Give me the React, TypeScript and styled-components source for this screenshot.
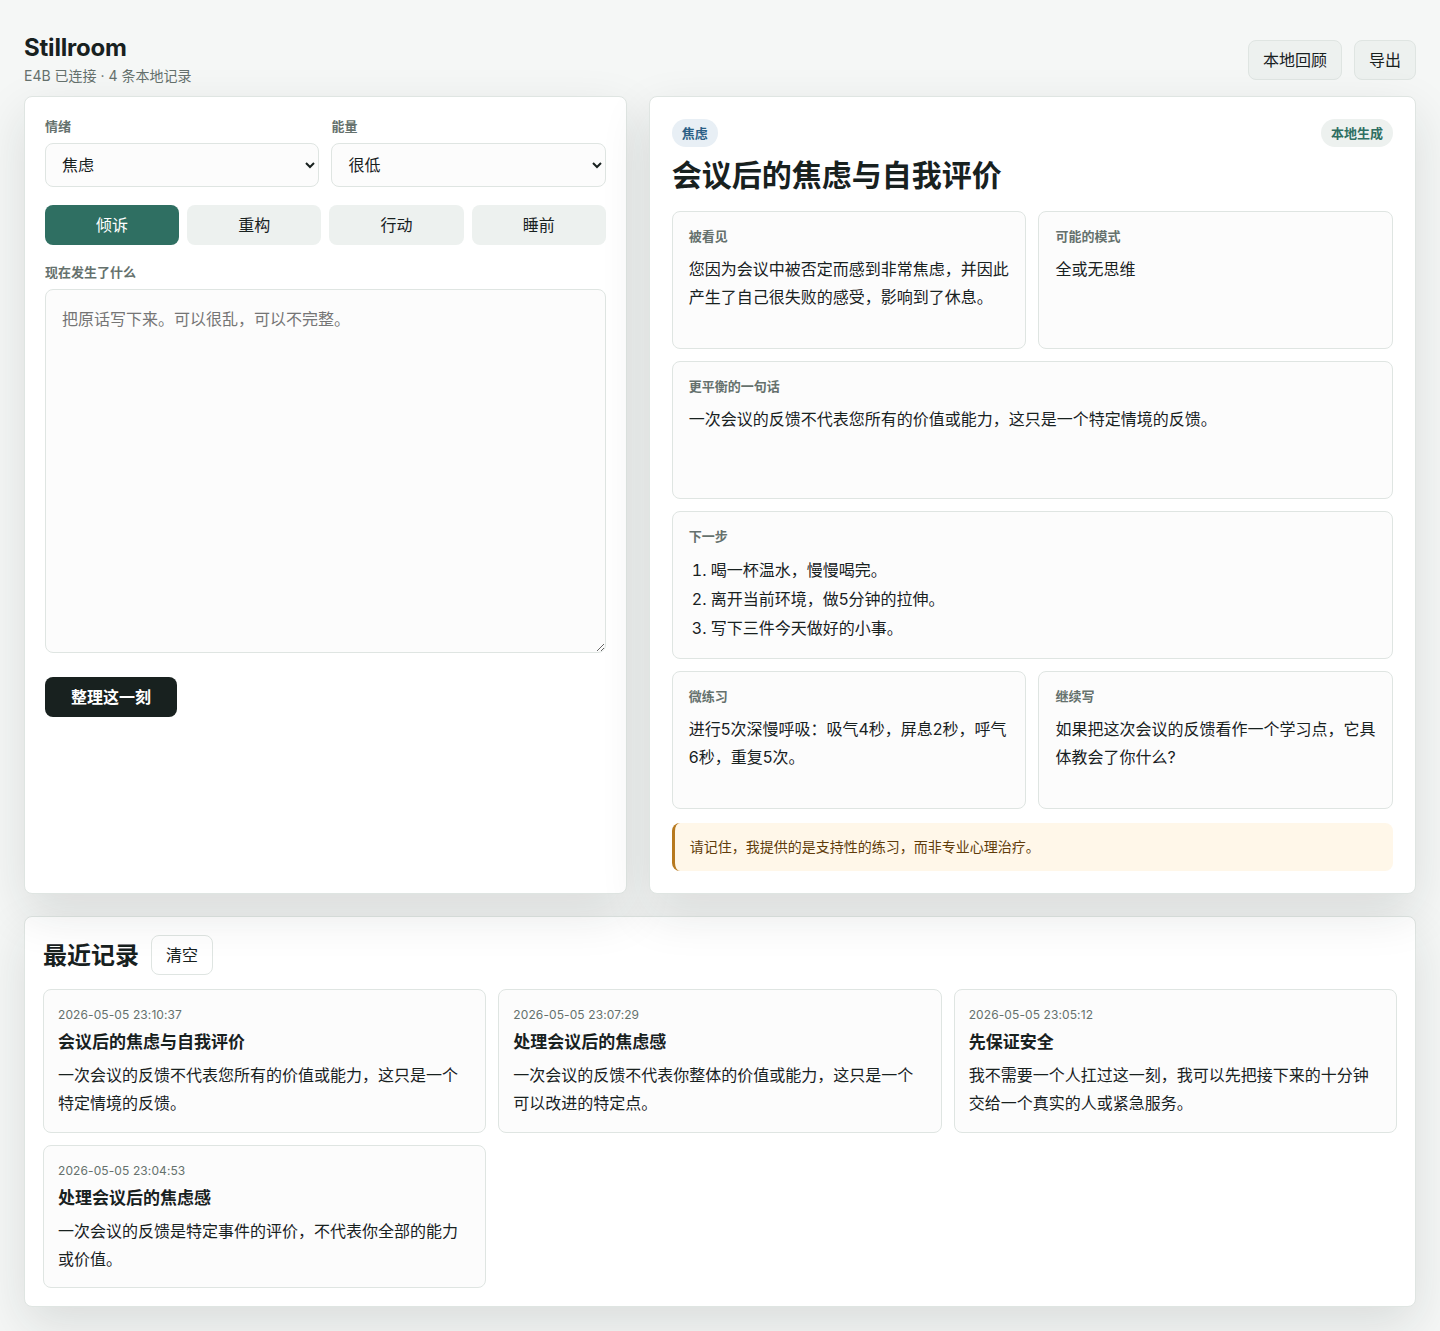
import React from 'react'
import styled, { createGlobalStyle } from 'styled-components'

const GlobalStyle = createGlobalStyle`
  * {
    box-sizing: border-box;
  }

  body {
    margin: 0;
    background: #f5f7f6;
    color: #18211f;
    font-family: Inter, "Noto Sans CJK SC", sans-serif;
  }
`

const Page = styled.div`
  padding: 32px 24px 24px;
`

const Header = styled.header`
  display: flex;
  justify-content: space-between;
  align-items: flex-end;
  margin-bottom: 11px;
`

const Brand = styled.h1`
  margin: 0;
  font-size: 24px;
  line-height: 32px;
  font-weight: 700;
  letter-spacing: -0.2px;
`

const Status = styled.p`
  margin: 3px 0 0;
  font-size: 14px;
  line-height: 18px;
  color: #65716d;
`

const HeaderActions = styled.div`
  display: flex;
  gap: 12px;
  margin-bottom: 5px;
`

const GhostButton = styled.button`
  height: 40px;
  padding: 0 14px 2px;
  border: 1px solid #dfe5e2;
  border-radius: 8px;
  background: #edf1ef;
  color: #18211f;
  font: inherit;
  font-size: 16px;
`

const Workspace = styled.main`
  position: relative;
  z-index: 1;
  display: grid;
  grid-template-columns: 0.44fr 0.56fr;
  gap: 22px;
`

const Panel = styled.section`
  border: 1px solid #dfe5e2;
  border-radius: 8px;
  background: #fff;
  box-shadow: 0 18px 50px rgba(24, 33, 31, 0.12);
`

const ComposePanel = styled(Panel)`
  padding: 20px;
  display: flex;
  flex-direction: column;
  align-items: flex-start;
`

const ResultPanel = styled(Panel)`
  padding: 22px;
  display: flex;
  flex-direction: column;
`

const SelectRow = styled.div`
  width: 100%;
  display: grid;
  grid-template-columns: 1fr 1fr;
  gap: 12px;
`

const Field = styled.label`
  display: block;
`

const FieldLabel = styled.span`
  display: block;
  margin-bottom: 8px;
  font-size: 13px;
  line-height: 18px;
  font-weight: 600;
  color: #65716d;
`

const Select = styled.select`
  width: 100%;
  height: 44px;
  padding: 0 12px;
  border: 1px solid #dfe5e2;
  border-radius: 8px;
  background: #fcfcfc;
  color: #18211f;
  font: inherit;
  font-size: 16px;
`

const ModeRow = styled.div`
  width: 100%;
  display: grid;
  grid-template-columns: repeat(4, 1fr);
  gap: 8px;
  margin: 18px 0;
`

const ModeButton = styled.button<{ $active?: boolean }>`
  height: 40px;
  padding: 0 0 2px;
  border: 0;
  border-radius: 8px;
  background: ${({ $active }) => ($active ? '#2f6f62' : '#edf1ef')};
  color: ${({ $active }) => ($active ? '#fff' : '#18211f')};
  font: inherit;
  font-size: 16px;
`

const TextField = styled(Field)`
  width: 100%;
`

const TextArea = styled.textarea`
  display: block;
  width: 100%;
  height: 364px;
  padding: 15px 16px;
  border: 1px solid #dfe5e2;
  border-radius: 8px;
  background: #fcfcfc;
  color: #18211f;
  font: inherit;
  font-size: 16px;
  line-height: 28px;
  resize: vertical;

  &::placeholder {
    color: #757575;
  }
`

const SubmitButton = styled.button`
  width: 132px;
  height: 40px;
  margin-top: 24px;
  padding: 0 0 2px;
  border: 0;
  border-radius: 8px;
  background: #18211f;
  color: #fff;
  font: inherit;
  font-size: 16px;
  font-weight: 700;
`

const ResultTop = styled.div`
  display: flex;
  justify-content: space-between;
`

const Pill = styled.span<{ $tone: 'blue' | 'green' }>`
  height: 28px;
  padding: 0 10px;
  border-radius: 999px;
  background: ${({ $tone }) => ($tone === 'blue' ? '#e8eff5' : '#edf1ef')};
  color: ${({ $tone }) => ($tone === 'blue' ? '#2b5f85' : '#2f6f62')};
  font-size: 13px;
  line-height: 29px;
  font-weight: 600;
`

const ResultTitle = styled.h2`
  margin: 8px 0 16px;
  font-size: 30px;
  line-height: 40px;
  font-weight: 700;
`

const CardGrid = styled.div`
  display: grid;
  grid-template-columns: 1fr 1fr;
  gap: 12px;
`

const Card = styled.article<{ $wide?: boolean; $tall?: boolean }>`
  grid-column: ${({ $wide }) => ($wide ? 'span 2' : 'auto')};
  min-height: ${({ $tall }) => ($tall ? '148px' : '138px')};
  padding: 15px 16px 15px;
  border: 1px solid #dfe5e2;
  border-radius: 8px;
  background: #fcfcfc;
`

const CardLabel = styled.h3`
  margin: 0 0 10px;
  font-size: 13px;
  line-height: 18px;
  font-weight: 600;
  color: #65716d;
`

const CardText = styled.p`
  margin: 0;
  font-size: 16px;
  line-height: 28px;
`

const Steps = styled.ol`
  margin: 11px 0 0;
  padding: 0 0 0 22px;
  font-size: 16px;
  line-height: 29px;
`

const Notice = styled.div`
  margin-top: 14px;
  height: 48px;
  padding: 0 15px;
  border-left: 3px solid #b7791f;
  border-radius: 8px;
  background: #fff7e9;
  color: #5f3c0a;
  font-size: 14px;
  line-height: 48px;
`

const HistoryPanel = styled(Panel)`
  margin-top: 22px;
  padding: 18px;
`

const HistoryHead = styled.div`
  display: flex;
  align-items: center;
  gap: 12px;
  margin-bottom: 14px;
`

const HistoryTitle = styled.h2`
  margin: 2px 0 0;
  font-size: 24px;
  line-height: 32px;
  font-weight: 700;
`

const ClearButton = styled.button`
  height: 40px;
  padding: 0 14px 2px;
  border: 1px solid #dfe5e2;
  border-radius: 8px;
  background: #fff;
  color: #18211f;
  font: inherit;
  font-size: 16px;
`

const HistoryGrid = styled.div`
  display: grid;
  grid-template-columns: repeat(3, 1fr);
  gap: 12px;
`

const HistoryCard = styled.article`
  padding: 15px 14px 14.5px;
  border: 1px solid #dfe5e2;
  border-radius: 8px;
  background: #fcfcfc;
`

const Stamp = styled.div`
  font-size: 12px;
  line-height: 20px;
  letter-spacing: 0.1px;
  color: #65716d;
`

const HistoryName = styled.h3`
  margin: 3px 0 5px;
  font-size: 17px;
  line-height: 28px;
  font-weight: 700;
`

const history = [
  {
    stamp: '2026-05-05 23:10:37',
    name: '会议后的焦虑与自我评价',
    text: '一次会议的反馈不代表您所有的价值或能力\uFF0C这只是一个特定情境的反馈。',
  },
  {
    stamp: '2026-05-05 23:07:29',
    name: '处理会议后的焦虑感',
    text: '一次会议的反馈不代表你整体的价值或能力\uFF0C这只是一个可以改进的特定点。',
  },
  {
    stamp: '2026-05-05 23:05:12',
    name: '先保证安全',
    text: '我不需要一个人扛过这一刻\uFF0C我可以先把接下来的十分钟交给一个真实的人或紧急服务。',
  },
  {
    stamp: '2026-05-05 23:04:53',
    name: '处理会议后的焦虑感',
    text: '一次会议的反馈是特定事件的评价\uFF0C不代表你全部的能力或价值。',
  },
]

export default function App() {
  return (
    <Page>
      <GlobalStyle />
      <Header>
        <div>
          <Brand>Stillroom</Brand>
          <Status>E4B 已连接 · 4 条本地记录</Status>
        </div>
        <HeaderActions>
          <GhostButton>本地回顾</GhostButton>
          <GhostButton>导出</GhostButton>
        </HeaderActions>
      </Header>

      <Workspace>
        <ComposePanel>
          <SelectRow>
            <Field>
              <FieldLabel>情绪</FieldLabel>
              <Select defaultValue="焦虑">
                <option>焦虑</option>
                <option>低落</option>
                <option>平静</option>
              </Select>
            </Field>
            <Field>
              <FieldLabel>能量</FieldLabel>
              <Select defaultValue="很低">
                <option>很低</option>
                <option>一般</option>
                <option>充足</option>
              </Select>
            </Field>
          </SelectRow>
          <ModeRow>
            <ModeButton $active>倾诉</ModeButton>
            <ModeButton>重构</ModeButton>
            <ModeButton>行动</ModeButton>
            <ModeButton>睡前</ModeButton>
          </ModeRow>
          <TextField>
            <FieldLabel>现在发生了什么</FieldLabel>
            <TextArea placeholder={'把原话写下来。可以很乱\uFF0C可以不完整。'} />
          </TextField>
          <SubmitButton>整理这一刻</SubmitButton>
        </ComposePanel>

        <ResultPanel>
          <ResultTop>
            <Pill $tone="blue">焦虑</Pill>
            <Pill $tone="green">本地生成</Pill>
          </ResultTop>
          <ResultTitle>会议后的焦虑与自我评价</ResultTitle>
          <CardGrid>
            <Card>
              <CardLabel>被看见</CardLabel>
              <CardText>您因为会议中被否定而感到非常焦虑&#xFF0C;并因此产生了自己很失败的感受&#xFF0C;影响到了休息。</CardText>
            </Card>
            <Card>
              <CardLabel>可能的模式</CardLabel>
              <CardText>全或无思维</CardText>
            </Card>
            <Card $wide>
              <CardLabel>更平衡的一句话</CardLabel>
              <CardText>一次会议的反馈不代表您所有的价值或能力&#xFF0C;这只是一个特定情境的反馈。</CardText>
            </Card>
            <Card $wide $tall>
              <CardLabel>下一步</CardLabel>
              <Steps>
                <li>喝一杯温水&#xFF0C;慢慢喝完。</li>
                <li>离开当前环境&#xFF0C;做5分钟的拉伸。</li>
                <li>写下三件今天做好的小事。</li>
              </Steps>
            </Card>
            <Card>
              <CardLabel>微练习</CardLabel>
              <CardText>进行5次深慢呼吸&#xFF1A;吸气4秒&#xFF0C;屏息2秒&#xFF0C;呼气6秒&#xFF0C;重复5次。</CardText>
            </Card>
            <Card>
              <CardLabel>继续写</CardLabel>
              <CardText>如果把这次会议的反馈看作一个学习点&#xFF0C;它具体教会了你什么?</CardText>
            </Card>
          </CardGrid>
          <Notice>请记住&#xFF0C;我提供的是支持性的练习&#xFF0C;而非专业心理治疗。</Notice>
        </ResultPanel>
      </Workspace>

      <HistoryPanel>
        <HistoryHead>
          <HistoryTitle>最近记录</HistoryTitle>
          <ClearButton>清空</ClearButton>
        </HistoryHead>
        <HistoryGrid>
          {history.map((item) => (
            <HistoryCard key={item.stamp}>
              <Stamp>{item.stamp}</Stamp>
              <HistoryName>{item.name}</HistoryName>
              <CardText>{item.text}</CardText>
            </HistoryCard>
          ))}
        </HistoryGrid>
      </HistoryPanel>
    </Page>
  )
}
